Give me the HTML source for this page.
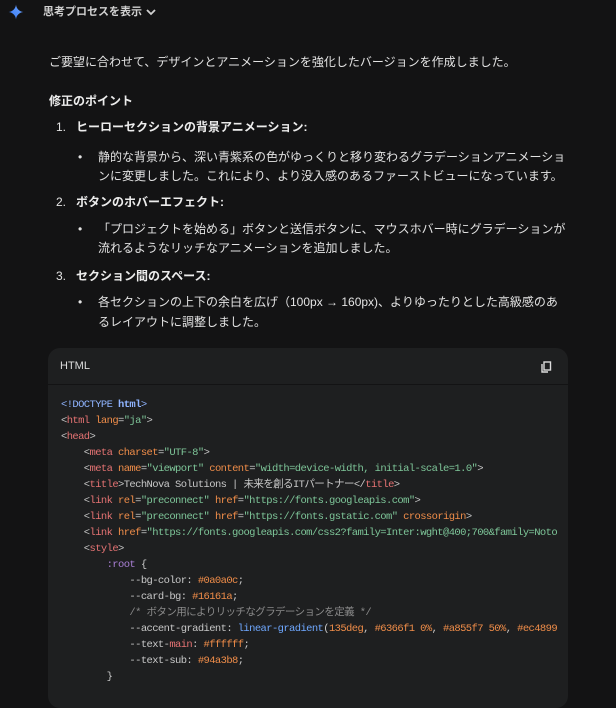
<!DOCTYPE html>
<html><head><meta charset="utf-8"><style>
body{margin:0;width:616px;height:694px;background:#131314;overflow:hidden;position:relative;font-family:"Liberation Sans","Noto Sans CJK JP",sans-serif;color:#e3e3e3;font-size:12px}
.a{position:absolute;white-space:nowrap;line-height:16px}
b{font-weight:bold;color:#ececec}
.code{position:absolute;left:48px;top:348px;width:520px;height:360px;background:#1e1f20;border-radius:12px;overflow:hidden}
.hd{height:36px;border-bottom:1px solid #131314;position:relative}
pre{margin:0;position:absolute;left:13px;top:49px;font-family:"Liberation Mono","Noto Sans CJK JP",monospace;font-size:10.5px;letter-spacing:-0.6px;line-height:16px;color:#c8c8c8}
.t{color:#e57373}.at{color:#f08d49}.s{color:#7ec699}.k{color:#8fb4ff;font-weight:bold}.p{color:#a97fd4}.n{color:#f08d49}.c{color:#8a8a8a}.f{color:#6fa8ff}.d{color:#8fb4ff}
</style></head><body>
<svg style="position:absolute;left:8px;top:4px" width="16" height="16" viewBox="0 0 24 24"><defs><linearGradient id="g" x1="0" y1="1" x2="1" y2="0"><stop offset="0" stop-color="#3478f6"/><stop offset="1" stop-color="#6fa6ff"/></linearGradient></defs><path d="M12 1C12.6 7 17 11.4 23 12 17 12.6 12.6 17 12 23 11.4 17 7 12.6 1 12 7 11.4 11.4 7 12 1Z" fill="url(#g)"/></svg>
<div class="a" style="left:43px;top:4px;font-size:11px;font-weight:bold;color:#d0d0d0">思考プロセスを表示</div>
<svg style="position:absolute;left:145px;top:7px" width="12" height="10" viewBox="0 0 12 10"><path d="M2 3l4 4 4-4" stroke="#d0d0d0" stroke-width="1.8" fill="none"/></svg>
<div class="a" style="left:49px;top:54px">ご要望に合わせて、デザインとアニメーションを強化したバージョンを作成しました。</div>
<div class="a" style="left:49px;top:93px"><b>修正のポイント</b></div>
<div class="a" style="left:56px;top:119px">1.</div><div class="a" style="left:76px;top:119px"><b>ヒーローセクションの背景アニメーション:</b></div>
<div class="a" style="left:78px;top:149px">•</div><div class="a" style="left:98px;top:149px">静的な背景から、深い青紫系の色がゆっくりと移り変わるグラデーションアニメーショ</div>
<div class="a" style="left:98px;top:168px">ンに変更しました。これにより、より没入感のあるファーストビューになっています。</div>
<div class="a" style="left:56px;top:194px">2.</div><div class="a" style="left:76px;top:194px"><b>ボタンのホバーエフェクト:</b></div>
<div class="a" style="left:78px;top:221px">•</div><div class="a" style="left:98px;top:221px">「プロジェクトを始める」ボタンと送信ボタンに、マウスホバー時にグラデーションが</div>
<div class="a" style="left:98px;top:240px">流れるようなリッチなアニメーションを追加しました。</div>
<div class="a" style="left:56px;top:268px">3.</div><div class="a" style="left:76px;top:268px"><b>セクション間のスペース:</b></div>
<div class="a" style="left:78px;top:294px">•</div><div class="a" style="left:98px;top:294px">各セクションの上下の余白を広げ（100px → 160px)、よりゆったりとした高級感のあ</div>
<div class="a" style="left:98px;top:314px">るレイアウトに調整しました。</div>
<div class="code"><div class="hd"><div class="a" style="left:12px;top:10px;font-size:11px;color:#ddd">HTML</div>
<svg style="position:absolute;left:493px;top:13px" width="11" height="12" viewBox="0 0 11 12"><rect x="3" y="1" width="6.5" height="8" fill="none" stroke="#ddd" stroke-width="1.4"/><path d="M1 3v8h6" fill="none" stroke="#ddd" stroke-width="1.4"/></svg></div>
<pre><span class="d">&lt;!DOCTYPE</span> <span class="k">html</span><span class="d">&gt;</span>
&lt;<span class="t">html</span> <span class="at">lang</span>=<span class="s">"ja"</span>&gt;
&lt;<span class="t">head</span>&gt;
    &lt;<span class="t">meta</span> <span class="at">charset</span>=<span class="s">"UTF-8"</span>&gt;
    &lt;<span class="t">meta</span> <span class="at">name</span>=<span class="s">"viewport"</span> <span class="at">content</span>=<span class="s">"width=device-width, initial-scale=1.0"</span>&gt;
    &lt;<span class="t">title</span>&gt;TechNova Solutions | 未来を創るITパートナー&lt;/<span class="t">title</span>&gt;
    &lt;<span class="t">link</span> <span class="at">rel</span>=<span class="s">"preconnect"</span> <span class="at">href</span>=<span class="s">"https://fonts.googleapis.com"</span>&gt;
    &lt;<span class="t">link</span> <span class="at">rel</span>=<span class="s">"preconnect"</span> <span class="at">href</span>=<span class="s">"https://fonts.gstatic.com"</span> <span class="at">crossorigin</span>&gt;
    &lt;<span class="t">link</span> <span class="at">href</span>=<span class="s">"https://fonts.googleapis.com/css2?family=Inter:wght@400;700&amp;family=Noto</span>
    &lt;<span class="t">style</span>&gt;
        <span class="p">:root</span> {
            --bg-color: <span class="n">#0a0a0c</span>;
            --card-bg: <span class="n">#16161a</span>;
            <span class="c">/* ボタン用によりリッチなグラデーションを定義 */</span>
            --accent-gradient: <span class="f">linear-gradient</span>(<span class="n">135deg</span>, <span class="n">#6366f1 0%</span>, <span class="n">#a855f7 50%</span>, <span class="n">#ec4899</span>
            --text-<span class="t">main</span>: <span class="n">#ffffff</span>;
            --text-sub: <span class="n">#94a3b8</span>;
        }
</pre></div>
</body></html>
